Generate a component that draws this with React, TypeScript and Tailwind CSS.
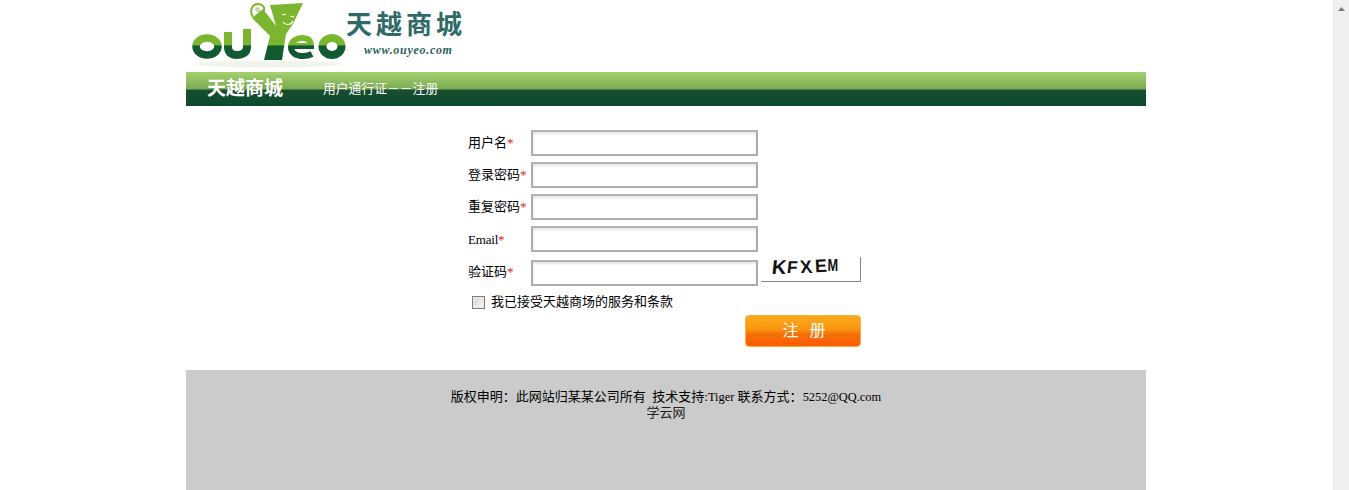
import React from 'react';

const cjk = "font-['Liberation_Serif','Noto_Sans_CJK_SC',serif]";

const Logo = () => (
  <svg width="162" height="72" viewBox="0 0 162 72" className="shrink-0">
    <defs>
      <linearGradient id="two" gradientUnits="userSpaceOnUse" x1="0" y1="0" x2="0" y2="72">
        <stop offset="0.62" stopColor="#7cb631" />
        <stop offset="0.64" stopColor="#125a31" />
      </linearGradient>
    </defs>
    <ellipse cx="82" cy="64" rx="74" ry="3.5" fill="#f0f4ea" />
    <g fill="none" stroke="url(#two)">
      <ellipse cx="21" cy="46.5" rx="11" ry="8.5" strokeWidth="7.5" />
      <path d="M42 32v15c0 6 4 8 9 8s10-2 10-8V29" strokeWidth="8" />
      <path d="M107 46h18c0-6-4-8-9-8s-11 3-11 9 5 9 12 9c4 0 7-1 9-2" strokeWidth="6" />
      <ellipse cx="146" cy="46.5" rx="9.5" ry="8.5" strokeWidth="8" />
    </g>
    <path d="M66 18L77 9l13 17-6-21 33-2-10 21-7 10-4 26H78l6-24z" fill="url(#two)" />
    <path d="M67 17c-4-6-1-13 5-13 4 0 7 3 6 6-1 2-3 3-5 2" fill="none" stroke="#7cb631" strokeWidth="2" />
    <circle cx="71.5" cy="9.5" r="1.6" fill="none" stroke="#7cb631" strokeWidth="1" />
    <path d="M96 15l4-1M104 16l4 1M97 22c3 4 8 3 10-1" fill="none" stroke="#fff" strokeWidth="1.2" />
  </svg>
);

const Field = ({ label, labelClass = '' }: { label: string; labelClass?: string }) => (
  <div className="flex items-center h-[26px]">
    <label className={`w-[63px] shrink-0 text-[13px] text-black whitespace-nowrap ${labelClass}`}>
      {label}
      <span className="text-[#e0212b]">*</span>
    </label>
    <input className="w-[227px] h-[26px] bg-white border-2 border-[#acacac] border-t-[#b4b4b4] shadow-[inset_0_2px_3px_#e4e4e4] outline-none" />
  </div>
);

export default function App() {
  return (
    <div className={`flex h-[490px] overflow-hidden bg-white ${cjk}`}>
      <div className="flex-1 min-w-0">
        <div className="w-[960px] ml-[186px]">
          <header className="h-[72px] flex">
            <Logo />
            <div className="flex flex-col items-start">
              <div className="font-['Noto_Sans_CJK_SC',sans-serif] font-bold text-[26px] leading-[30px] tracking-[4px] text-[#2f6a68] mt-[8px] -ml-[2px] whitespace-nowrap">
                天越商城
              </div>
              <div className="italic font-bold text-[12px] leading-[14px] text-[#2d6260] ml-[16px] mt-[5px] tracking-[0.7px]">
                www.ouyeo.com
              </div>
            </div>
          </header>

          <div className="h-[34px] flex items-center pl-[21px] text-white bg-[linear-gradient(#a4d16c_0%,#7cab55_50%,#174f30_53%,#0c4a2b_100%)]">
            <span className="text-[19px] font-bold w-[116px] whitespace-nowrap">天越商城</span>
            <span className="text-[12.8px] mt-[2px] whitespace-nowrap">用户通行证－－注册</span>
          </div>

          <form className="w-[393px] ml-[282px] pt-[24px] h-[264px]">
            <div className="flex flex-col gap-[6px]">
              <Field label="用户名" />
              <Field label="登录密码" labelClass="-mt-[1px]" />
              <Field label="重复密码" labelClass="-mt-[1px]" />
              <Field label="Email" labelClass="mt-[1px] tracking-[-0.2px]" />
            </div>
            <div className="flex items-start mt-[8px]">
              <Field label="验证码" labelClass="-mt-[3px]" />
              <div className="ml-[3px] -mt-[3px] w-[100px] h-[25px] bg-white border-r border-b border-[#8a8a8a] flex items-start pl-[11px] font-['Liberation_Sans',sans-serif] font-bold text-[#111] leading-none">
                <span className="text-[20px] w-[15px] -skew-x-6">K</span>
                <span className="text-[17px] w-[11px] mt-[2px] -skew-x-6">F</span>
                <span className="text-[18px] w-[17px] mt-[1px] pl-[2px] skew-x-6">X</span>
                <span className="text-[18px] w-[12px] -rotate-3">E</span>
                <span className="text-[17px] w-[11px] -ml-[1px] scale-x-75">M</span>
              </div>
            </div>
            <div className="flex items-center mt-[9px] ml-[4px] h-[14px]">
              <span className="w-[13px] h-[13px] border border-[#7a7a7a] bg-[linear-gradient(135deg,#d4d4d4,#f8f8f8)] shadow-[inset_0_0_0_1px_#ececec]" />
              <span className="ml-[6px] text-[13px] text-black whitespace-nowrap">我已接受天越商场的服务和条款</span>
            </div>
            <div className="flex justify-end mt-[6px]">
              <button
                type="button"
                className="w-[116px] h-[32px] rounded-[4px] border border-[#f7b040] text-white text-[16px] tracking-[1px] pl-[3px] bg-[linear-gradient(#fcab1c_0%,#f99410_45%,#f4700a_60%,#ff5c00_100%)]"
              >
                注&nbsp;&nbsp;册
              </button>
            </div>
          </form>

          <footer className="h-[120px] bg-[#cbcbcb] pt-[19px] text-center text-[13px] leading-[15px] text-black">
            <div>
              版权申明：此网站归某某公司所有&nbsp;&nbsp;技术支持:<span className="text-[12.4px]">Tiger</span> 联系方式：<span className="text-[12.4px]">5252@QQ.com</span>
            </div>
            <div className="text-[#222]">学云网</div>
          </footer>
        </div>
      </div>

      <div className="w-4 shrink-0 bg-[#f0f0f0] border-l border-[#e6e6e6] flex justify-center pt-[7px]">
        <svg width="7" height="4" viewBox="0 0 7 4">
          <path d="M3.5 0L7 4H0z" fill="#7a7a7a" />
        </svg>
      </div>
    </div>
  );
}
